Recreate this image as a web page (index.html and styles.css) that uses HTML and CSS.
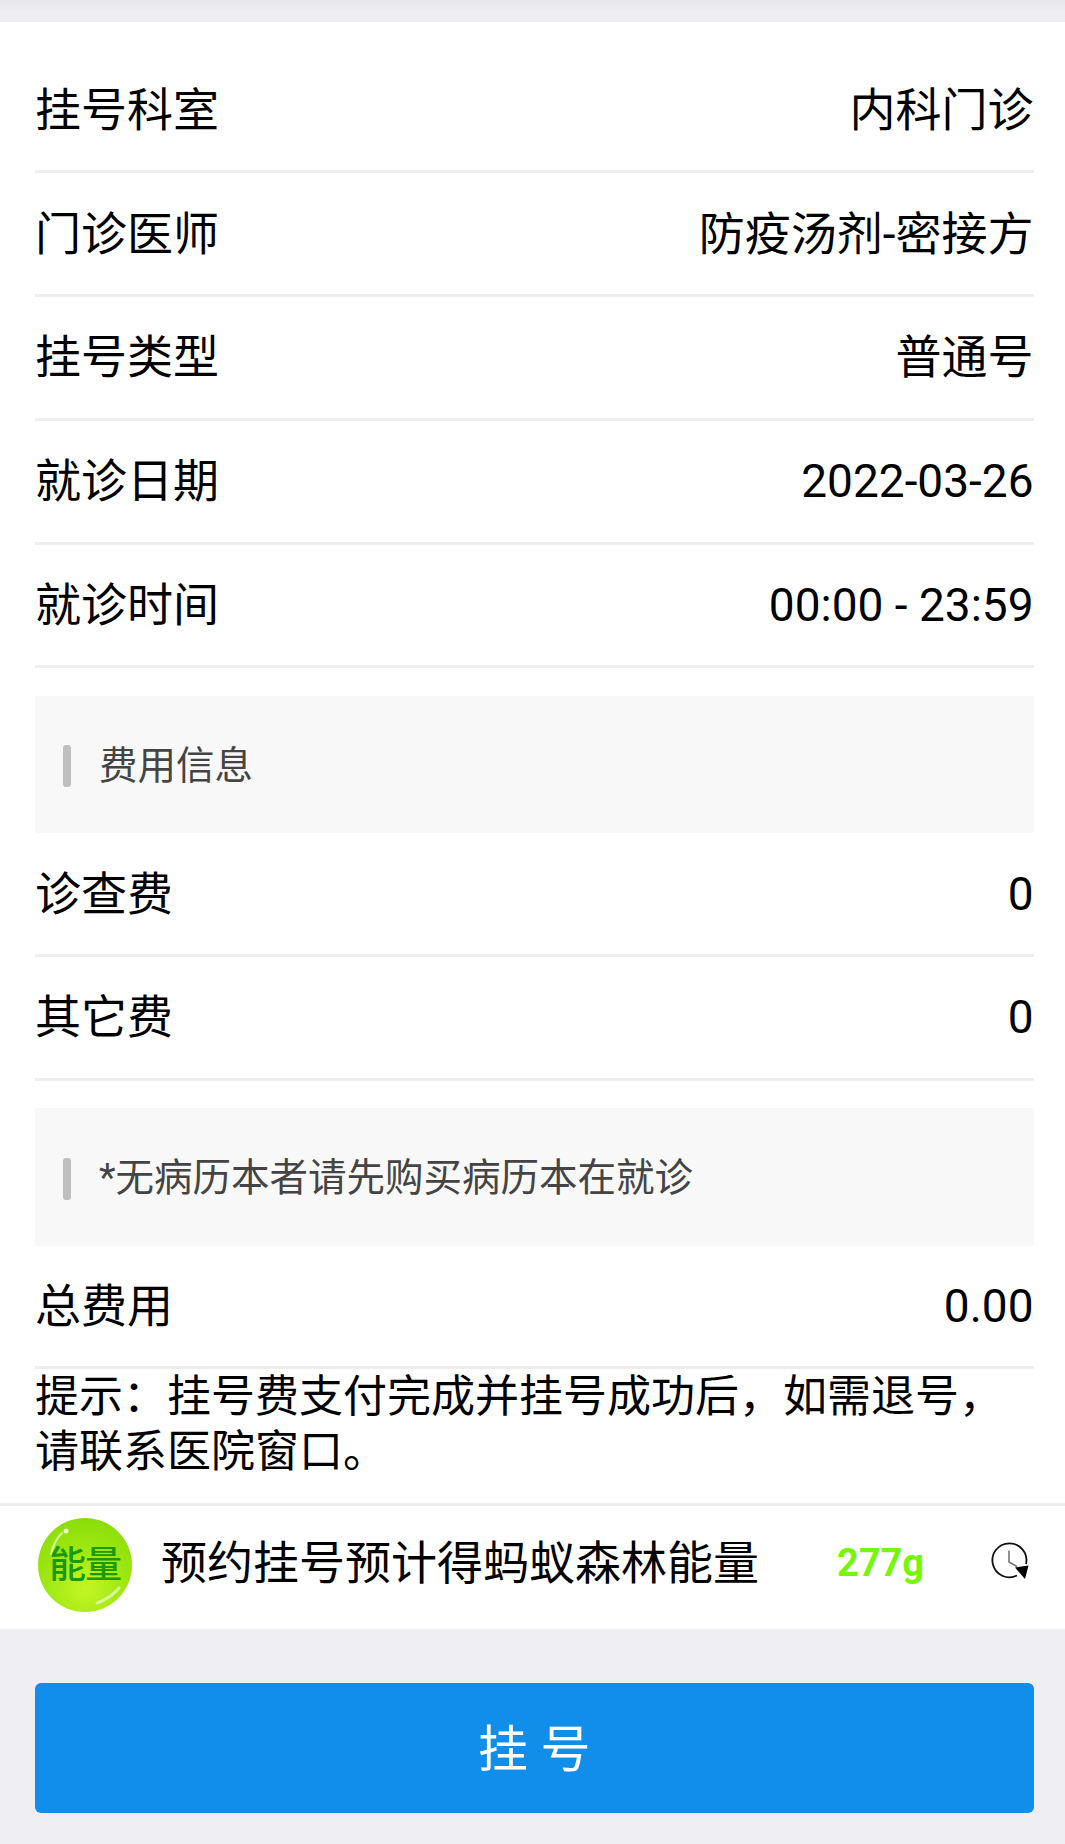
FILE: index.html
```html
<!DOCTYPE html>
<html lang="zh-CN">
    <head>
        <meta charset="UTF-8">
        <meta name="viewport" content="width=device-width, initial-scale=1.0">
        <link rel="stylesheet" href="styles.css">
        <title>挂号确认</title>
    </head>
    <body>
        <div class="top-gap"></div>
        <div class="card">
            <div class="row"><span>挂号科室</span><span>内科门诊</span></div>
            <div class="row"><span>门诊医师</span><span>防疫汤剂-密接方</span></div>
            <div class="row"><span>挂号类型</span><span>普通号</span></div>
            <div class="row"><span>就诊日期</span><span>2022-03-26</span></div>
            <div class="row"><span>就诊时间</span><span>00:00 - 23:59</span></div>
            <div class="section"><i class="section-bar"></i>费用信息</div>
            <div class="row"><span>诊查费</span><span>0</span></div>
            <div class="row"><span>其它费</span><span>0</span></div>
            <div class="section"><i class="section-bar"></i>*无病历本者请先购买病历本在就诊</div>
            <div class="row row-total"><span>总费用</span><span>0.00</span></div>
            <p class="tips">提示：挂号费支付完成并挂号成功后，如需退号，请联系医院窗口。</p>
        </div>
        <div class="energy">
            <div class="energy-ball">
                <svg class="energy-shine" width="94" height="94" viewBox="0 0 94 94">
                    <path d="M13 36C15 27 19 20 24 15" fill="none" stroke="#d8f7a0" stroke-width="2" stroke-linecap="round"/>
                    <circle cx="28" cy="13" r="2.5" fill="#eefdd0"/>
                    <path d="M59 85C68 82 75 77 81 70" fill="none" stroke="#d8f7a0" stroke-width="3" stroke-linecap="round"/>
                </svg>
                <span class="energy-word">能量</span>
            </div>
            <span class="energy-text">预约挂号预计得蚂蚁森林能量</span>
            <span class="energy-num">277g</span>
            <svg class="energy-clock" width="40" height="40" viewBox="0 0 40 40">
                <path d="M36 23A17 17 0 1 0 27 34.5" fill="none" stroke="#111" stroke-width="1.8"/>
                <path d="M19 9.5V21L27 25.5" fill="none" stroke="#777" stroke-width="1.6"/>
                <path d="M25 26.5L38.5 24.5L35 38Z" fill="#000"/>
            </svg>
        </div>
        <div class="footer">
            <button class="submit">挂 号</button>
        </div>
    </body>
</html>
```

FILE: styles.css
```css
body, html {
    width: 100%;
    margin: 0;
}
body {
    background-color: #eeeef3;
    font-family: Roboto, "Noto Sans CJK SC", sans-serif;
    color: #000;
    height: 1844px;
    overflow: hidden;
}
.top-gap {
    height: 22px;
    background: linear-gradient(#e8e8ec, #eeeef3 12px);
}
.card {
    background-color: #fff;
    padding: 27.5px 31.5px 0 35px;
}
.row {
    display: flex;
    justify-content: space-between;
    align-items: center;
    height: 120.75px;
    border-bottom: 3px solid #eeeeee;
    font-size: 46px;
    line-height: 1;
}
.section {
    display: flex;
    align-items: center;
    box-sizing: border-box;
    height: 137.5px;
    margin-top: 27.5px;
    padding: 3px 0 0 28px;
    background-color: #f8f8f8;
    font-size: 38.5px;
    line-height: 1;
    color: #444;
}
.section-bar {
    width: 8px;
    height: 42px;
    margin-right: 28px;
    border-radius: 3px;
    background-color: #bfbfbf;
}
.row-total {
    height: 120px;
}
.tips {
    margin: 0;
    height: 133px;
    padding-top: 1px;
    font-size: 44px;
    line-height: 55px;
}
.energy {
    display: flex;
    align-items: center;
    box-sizing: border-box;
    height: 126px;
    padding: 0 35px 4px 38px;
    border-top: 3px solid #eeeeee;
    background-color: #fff;
}
.energy-ball {
    position: relative;
    display: flex;
    align-items: center;
    justify-content: center;
    width: 94px;
    height: 94px;
    border-radius: 50%;
    background: radial-gradient(circle at 50% 75%, #c4f624 0%, #a0e812 45%, #80d806 100%);
}
.energy-shine {
    position: absolute;
    left: 0;
    top: 0;
}
.energy-word {
    font-size: 37px;
    line-height: 1;
    font-weight: 500;
    color: #1c9a06;
    letter-spacing: -1px;
}
.energy-text {
    margin: 0 0 5px 29px;
    font-size: 46px;
    line-height: 1;
    white-space: nowrap;
}
.energy-num {
    margin: 0 66px 4px auto;
    font-size: 38px;
    line-height: 1;
    font-weight: 700;
    color: #76f70a;
}
.energy-clock {
    margin-bottom: 8px;
}
.footer {
    padding: 54px 31.5px 0 35px;
}
.submit {
    display: block;
    width: 100%;
    height: 130px;
    padding: 4px 0 0;
    border: none;
    border-radius: 6px;
    background-color: #118ee9;
    color: #fff;
    font-family: inherit;
    font-size: 50px;
    line-height: 1;
}
```
